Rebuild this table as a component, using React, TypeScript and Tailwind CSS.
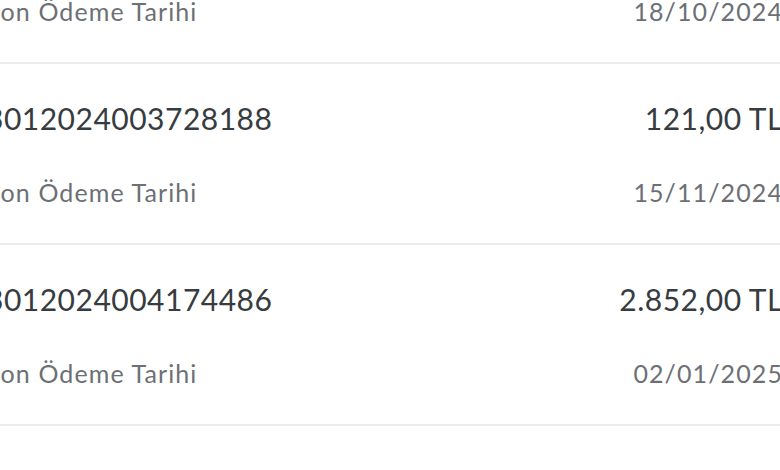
import React from 'react'

type Invoice = {
  no: string
  amount: string
  due: string
}

const invoices: Invoice[] = [
  { no: '3012024003341207', amount: '98,00 TL', due: '18/10/2024' },
  { no: '3012024003728188', amount: '121,00 TL', due: '15/11/2024' },
  { no: '3012024004174486', amount: '2.852,00 TL', due: '02/01/2025' },
  { no: '3012025000000777', amount: '1.641,00 TL', due: '03/02/2025' },
]

function InvoiceRow({ inv }: { inv: Invoice }) {
  return (
    <div className="h-[181px] shrink-0 border-b-2 border-[#ececec] pt-[33px]">
      <div className="flex h-[42px] items-center justify-between text-[30px] tracking-[0.5px] text-[#373c41]">
        <span>{inv.no}</span>
        <span>{inv.amount}</span>
      </div>
      <div className="mt-[37px] flex h-[34px] items-center justify-between text-[25px] tracking-[1.1px] text-[#6c7075]">
        <span>Son Ödeme Tarihi</span>
        <span>{inv.due}</span>
      </div>
    </div>
  )
}

export default function App() {
  return (
    <div className="h-[470px] w-[780px] overflow-hidden bg-white" style={{ fontFamily: 'Lato, "Open Sans", sans-serif' }}>
      <div className="-mt-[117px] -ml-[14px] flex w-[797px] flex-col">
        {invoices.map((inv) => (
          <InvoiceRow key={inv.no} inv={inv} />
        ))}
      </div>
    </div>
  )
}
